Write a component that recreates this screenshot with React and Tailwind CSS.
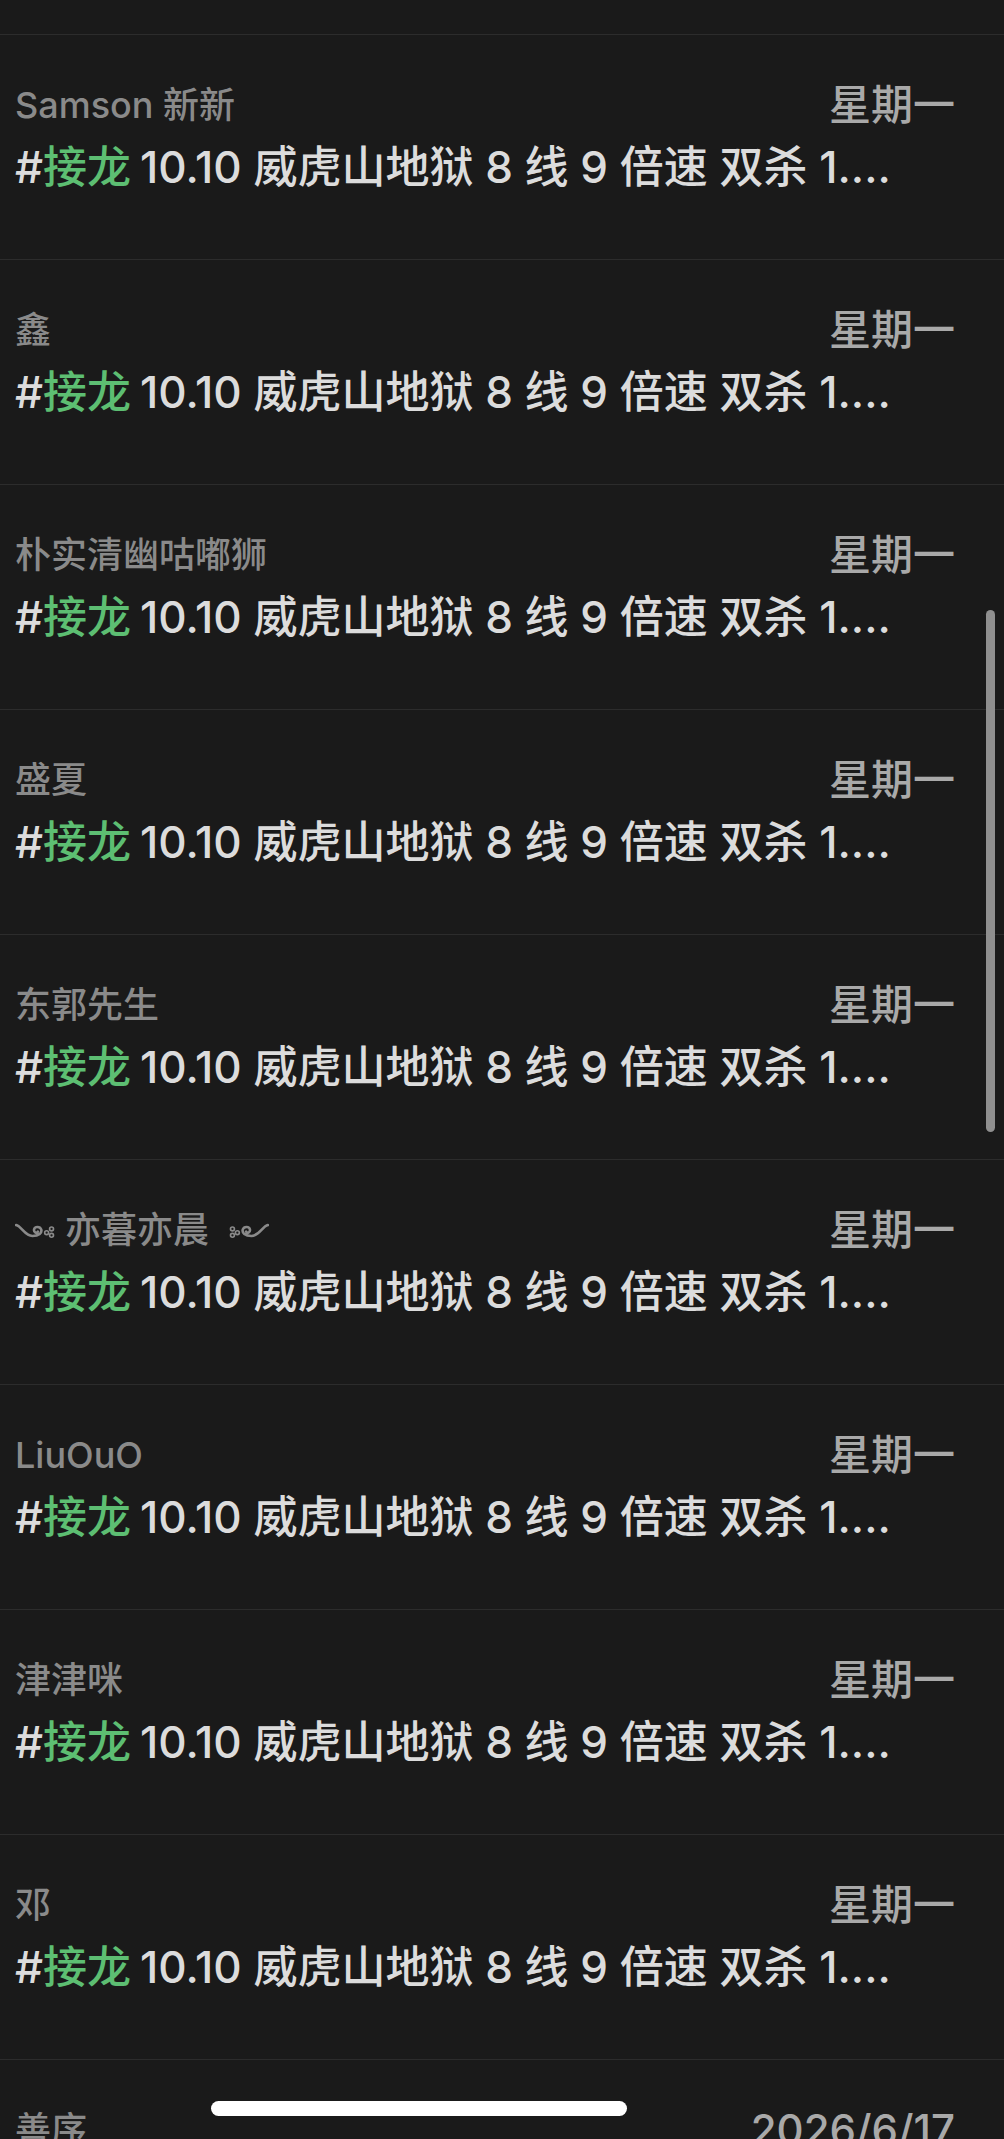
import React from 'react';

const names = ['Samson 新新', '鑫', '朴实清幽咕嘟狮', '盛夏', '东郭先生', 'ornament', 'LiuOuO', '津津咪', '邓'];

const font = { fontFamily: 'Inter, "Noto Sans CJK SC", sans-serif' };

function Ornament({ flip }) {
  return (
    <svg width="48" height="19" viewBox="0 0 44 16" className={flip ? '-scale-x-100' : ''}>
      <path
        d="M1 3 C6 4, 9 13, 16 13 C22 13, 25 10, 24 7 C23 4, 18 4, 17.5 7 C17 10, 20 11, 21 9"
        fill="none"
        stroke="#8a8a8a"
        strokeWidth="2.4"
        strokeLinecap="round"
      />
      <circle cx="29" cy="10" r="1.8" fill="none" stroke="#8a8a8a" strokeWidth="1.5" />
      <circle cx="33.5" cy="6.6" r="1.8" fill="none" stroke="#8a8a8a" strokeWidth="1.5" />
      <circle cx="33.5" cy="12.4" r="1.8" fill="none" stroke="#8a8a8a" strokeWidth="1.5" />
    </svg>
  );
}

function Name({ name }) {
  if (name === 'ornament') {
    return (
      <div className="flex items-center gap-[2px]">
        <Ornament />
        <span>亦暮亦晨</span>
        <span className="w-[8px]" />
        <Ornament flip />
      </div>
    );
  }
  return <span>{name}</span>;
}

function Row({ name, date = '星期一' }) {
  return (
    <div className="h-[225px] border-t border-[#2c2c2c] pl-[15px] pr-[49px] pt-[48px]">
      <div className="flex items-center justify-between h-[44px]">
        <div className="text-[36px] font-medium text-[#8a8a8a] leading-none">
          <Name name={name} />
        </div>
        <div className="text-[42px] font-medium text-[#a9a9a9] leading-none">{date}</div>
      </div>
      <div className="mt-[12px] h-[56px] flex items-center text-[44px] font-medium leading-none text-[#dcdcdc] whitespace-nowrap">
        <span>#</span>
        <span className="text-[#5dbe72]">接龙</span>
        <span className="ml-[9px]">10.10 威虎山地狱 8 线 9 倍速 双杀 1....</span>
      </div>
    </div>
  );
}

export default function App() {
  return (
    <div className="relative w-[1004px] h-[2139px] overflow-hidden bg-[#1a1a1a]" style={font}>
      <div className="h-[34px]" />
      {names.map((n, i) => (
        <Row key={i} name={n} />
      ))}
      <Row name="善序" date="2026/6/17" />

      {/* scroll indicator */}
      <div className="absolute left-[986px] top-[610px] w-[9px] h-[522px] rounded-full bg-[#8f8f8f]" />
      {/* home indicator */}
      <div className="absolute left-[211px] top-[2101px] w-[416px] h-[15px] rounded-full bg-white" />
    </div>
  );
}
